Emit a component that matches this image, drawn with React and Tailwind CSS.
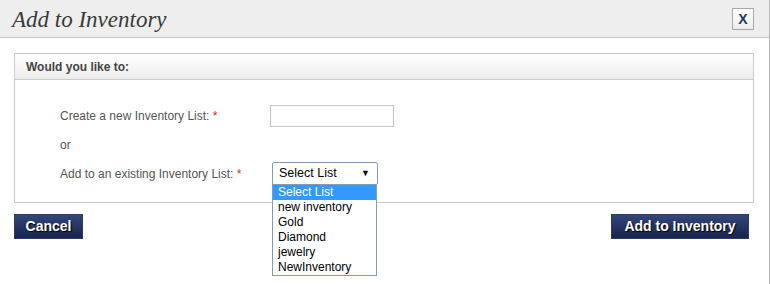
export default function App() {
  const opciones = ['Select List', 'new inventory', 'Gold', 'Diamond', 'jewelry', 'NewInventory'];

  return (
    <div className="w-[770px] h-[284px] bg-white border-r border-[#b5b5b5] font-['Liberation_Sans',Arial,sans-serif] overflow-hidden">
      {/* Encabezado */}
      <div className="h-[38px] bg-[#eeeeee] border-b border-[#c8c8c8] flex items-center justify-between pl-[12px] pr-[15px]">
        <h1 className="font-['Liberation_Serif','Times_New_Roman',serif] italic text-[23px] text-[#3a3a3a] leading-none pt-[2px]">Add to Inventory</h1>
        <button className="w-[22px] h-[22px] border border-[#aaa] bg-gradient-to-b from-white to-[#ececec] text-[#1d3a6c] font-bold text-[14px] leading-none flex items-center justify-center">X</button>
      </div>

      <div className="px-[14px] pt-[15px]">
        <div className="w-[740px] border border-[#cccccc]">
          <div className="h-[26px] border-b border-[#cccccc] bg-gradient-to-b from-white to-[#ededed] flex items-center pl-[11px] text-[12px] font-bold text-[#444]">
            Would you like to:
          </div>
          <div className="pl-[45px] pt-[25px] pb-[17px] text-[12px] text-[#555]">
            <div className="flex items-center h-[22px]">
              <label className="w-[210px]">Create a new Inventory List: <span className="text-[#d22]">*</span></label>
              <input type="text" className="w-[124px] h-[22px] border border-[#c4c4c4] bg-white" />
            </div>
            <div className="h-[35px] flex items-center">or</div>
            <div className="flex items-center h-[23px]">
              <label className="w-[210px]">Add to an existing Inventory List: <span className="text-[#d22]">*</span></label>
              <div className="relative ml-[2px]">
                <div className="w-[106px] h-[23px] border border-[#7f9db9] rounded-[2px] bg-white flex items-center justify-between pl-[6px] pr-[7px] text-[12.5px] text-black">
                  <span>Select List</span>
                  <span className="text-[9px]">▼</span>
                </div>
                <ul className="absolute left-0 top-[22px] w-[105px] border border-[#7f9db9] bg-white text-[12px] text-black leading-[15px] z-10">
                  {opciones.map((op, i) => (
                    <li key={op} className={i === 0 ? 'bg-[#3399ff] text-white pl-[5px]' : 'pl-[5px]'}>{op}</li>
                  ))}
                </ul>
              </div>
            </div>
          </div>
        </div>

        <div className="mt-[11px] w-[735px] flex justify-between">
          <button className="w-[69px] h-[25px] bg-gradient-to-b from-[#34467a] to-[#18244e] border border-[#2c3d6b] text-white font-bold text-[14px] [text-shadow:1px_1px_1px_#000]">Cancel</button>
          <button className="w-[138px] h-[25px] bg-gradient-to-b from-[#34467a] to-[#18244e] border border-[#2c3d6b] text-white font-bold text-[14px] [text-shadow:1px_1px_1px_#000]">Add to Inventory</button>
        </div>
      </div>
    </div>
  )
}
